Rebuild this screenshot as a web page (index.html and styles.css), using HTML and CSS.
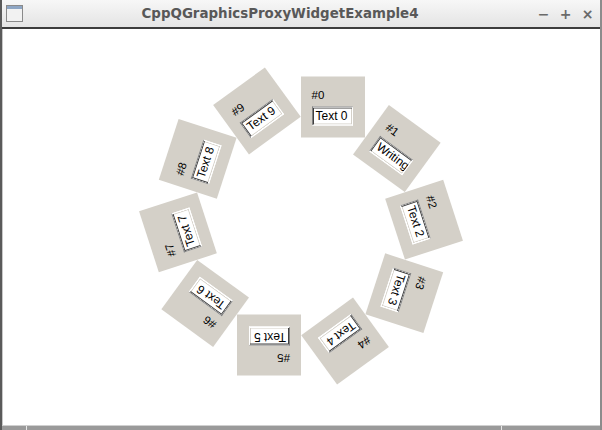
FILE: index.html
```html
<!DOCTYPE html>
<html>
<head>
  <meta charset="utf-8">
  <title>CppQGraphicsProxyWidgetExample4</title>
  <link rel="stylesheet" href="styles.css">
</head>
<body>

  <div class="janela">
    <div class="titulo">
      <span class="icone"><span class="icone-barra"></span></span>
      <span class="titulo-texto">CppQGraphicsProxyWidgetExample4</span>
      <span class="botoes">
        <span class="botao">&minus;</span>
        <span class="botao">+</span>
        <span class="botao">&times;</span>
      </span>
    </div>

    <div class="vista">
      <div class="cena">
        <div class="item" style="--a: 0deg"><span class="rotulo">#0</span><span class="campo">Text 0</span></div>
        <div class="item" style="--a: 36deg"><span class="rotulo">#1</span><span class="campo">Writing</span></div>
        <div class="item" style="--a: 72deg"><span class="rotulo">#2</span><span class="campo">Text 2</span></div>
        <div class="item" style="--a: 108deg"><span class="rotulo">#3</span><span class="campo">Text 3</span></div>
        <div class="item" style="--a: 144deg"><span class="rotulo">#4</span><span class="campo">Text 4</span></div>
        <div class="item" style="--a: 180deg"><span class="rotulo">#5</span><span class="campo">Text 5</span></div>
        <div class="item" style="--a: 216deg"><span class="rotulo">#6</span><span class="campo">Text 6</span></div>
        <div class="item" style="--a: 252deg"><span class="rotulo">#7</span><span class="campo">Text 7</span></div>
        <div class="item" style="--a: 288deg"><span class="rotulo">#8</span><span class="campo">Text 8</span></div>
        <div class="item" style="--a: 324deg"><span class="rotulo">#9</span><span class="campo">Text 9</span></div>
      </div>
    </div>

    <div class="rodape">
      <span class="alca"></span>
      <span class="alca-meio"></span>
      <span class="alca"></span>
    </div>
  </div>

</body>
</html>
```

FILE: styles.css
```css
body {
  margin: 0;
  font-family: "DejaVu Sans", sans-serif;
  background: #ffffff;
}

.janela {
  width: 602px;
  height: 430px;
  box-sizing: border-box;
  display: flex;
  flex-direction: column;
  border-left: 2px solid #5a5a5a;
  border-right: 2px solid #8c8c8c;
  background: #ffffff;
}

/* barra de titulo */
.titulo {
  height: 27px;
  display: flex;
  align-items: center;
  padding: 0 6px 0 4px;
  background: linear-gradient(#f7f7f7, #e4e4e4);
  border-bottom: 2px solid #3c3c3c;
}

.icone {
  width: 17px;
  height: 17px;
  box-sizing: border-box;
  border: 1px solid #8a8a8a;
  background: #f2f2f2;
  display: flex;
  flex-direction: column;
}

.icone-barra {
  height: 3px;
  background: #8ea6c4;
}

.titulo-texto {
  flex: 1;
  text-align: center;
  font-weight: bold;
  font-size: 13.4px;
  color: #585858;
}

.botoes {
  display: flex;
  gap: 9px;
  color: #6a6a6a;
  font-weight: bold;
  font-size: 14px;
}

.botao {
  width: 13px;
  text-align: center;
}

/* area da cena */
.vista {
  flex: 1;
  position: relative;
  overflow: hidden;
  border-left: 1px solid #c8c8c8;
}

.cena {
  position: absolute;
  left: 297.5px;
  top: 196.5px;
  width: 0;
  height: 0;
}

.item {
  position: absolute;
  left: 0;
  top: 0;
  width: 64px;
  height: 61px;
  box-sizing: border-box;
  padding: 12px 11px 0 11px;
  background: #d4d0c8;
  transform-origin: 0 0;
  transform: rotate(var(--a)) translateY(-149.5px);
  font-family: "Liberation Sans", Arial, sans-serif;
  font-size: 11px;
  color: #000000;
  display: flex;
  flex-direction: column;
  align-items: flex-start;
  gap: 5px;
}

.rotulo {
  line-height: 13px;
  font-size: 11.5px;
}

.campo {
  width: 41px;
  height: 19px;
  box-sizing: border-box;
  padding: 2px 0 0 3px;
  background: #ffffff;
  border: 1px solid;
  border-color: #808080 #ffffff #ffffff #808080;
  box-shadow: inset 1px 1px 0 #404040, inset -1px -1px 0 #d4d0c8;
  font-size: 12px;
  line-height: 13px;
  white-space: nowrap;
  overflow: hidden;
}

/* moldura inferior */
.rodape {
  height: 4px;
  display: flex;
  border-top: 1px solid #d0d0d0;
  background: #9a9a9a;
}

.alca {
  width: 24px;
  border-right: 1px solid #e8e8e8;
}

.alca:last-child {
  width: 98px;
  border-right: none;
  border-left: 1px solid #e8e8e8;
}

.alca-meio {
  flex: 1;
}
```
